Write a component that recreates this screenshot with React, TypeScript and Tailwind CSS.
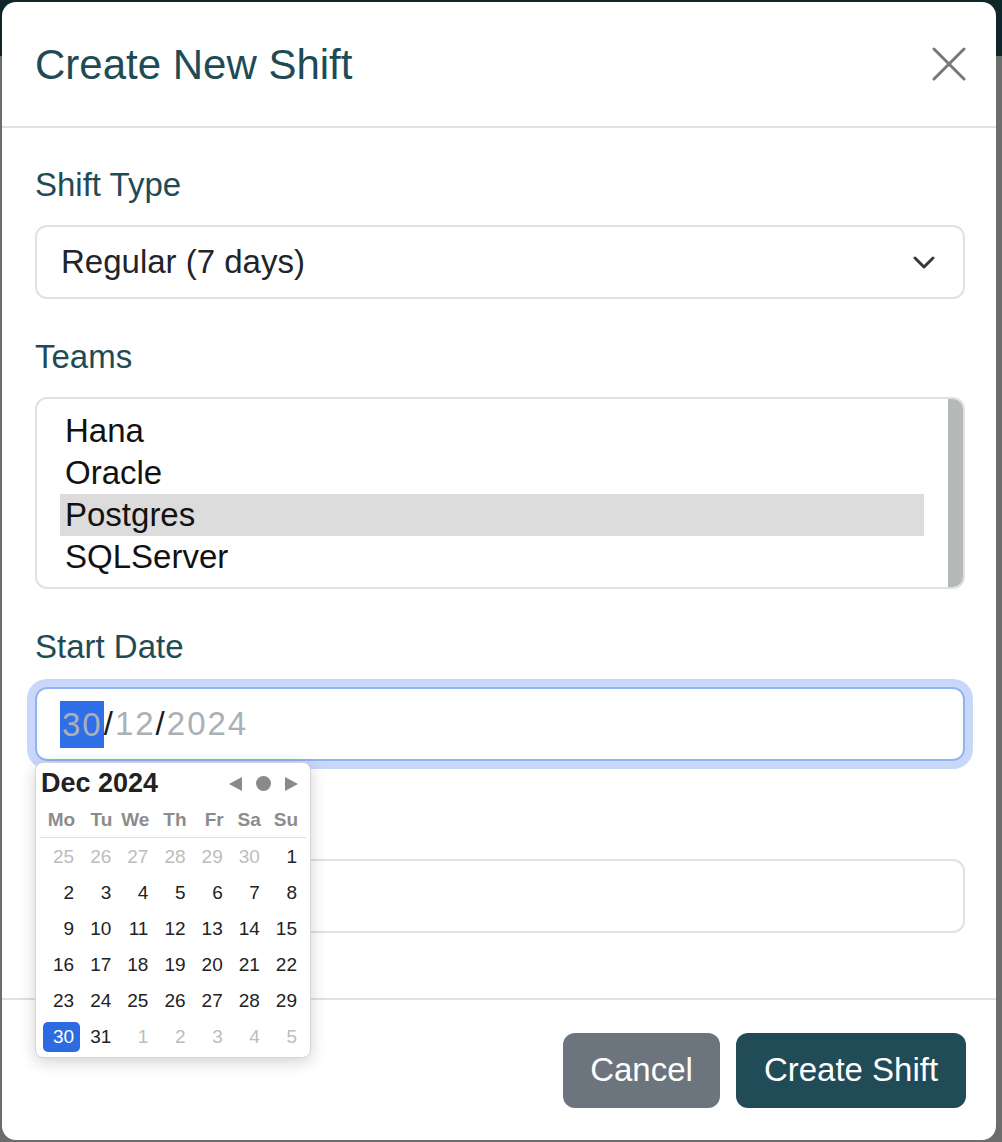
import React from "react";

const teams = ["Hana", "Oracle", "Postgres", "SQLServer"];
const weekdays = ["Mo", "Tu", "We", "Th", "Fr", "Sa", "Su"];

type Day = { n: number; muted?: boolean; selected?: boolean };

const weeks: Day[][] = [
    [{ n: 25, muted: true }, { n: 26, muted: true }, { n: 27, muted: true }, { n: 28, muted: true }, { n: 29, muted: true }, { n: 30, muted: true }, { n: 1 }],
    [2, 3, 4, 5, 6, 7, 8].map(n => ({ n })),
    [9, 10, 11, 12, 13, 14, 15].map(n => ({ n })),
    [16, 17, 18, 19, 20, 21, 22].map(n => ({ n })),
    [23, 24, 25, 26, 27, 28, 29].map(n => ({ n })),
    [{ n: 30, selected: true }, { n: 31 }, { n: 1, muted: true }, { n: 2, muted: true }, { n: 3, muted: true }, { n: 4, muted: true }, { n: 5, muted: true }],
];

function Label({ children }: { children: React.ReactNode }) {
    return <div className="text-[33px] leading-[48px] text-[#1e4b56] mb-[16px]">{children}</div>;
}

function DatePopup() {
    return (
        <div className="absolute left-0 top-[75px] w-[276px] h-[296px] bg-white rounded-[8px] border border-[#d4d4d4] shadow-[0_4px_16px_rgba(0,0,0,0.18)] z-10 px-[4px]">
            <div className="h-[41px] flex items-center justify-between pl-[1px] pr-[8px]">
                <span className="text-[27px] font-bold text-[#222]">Dec 2024</span>
                <div className="flex items-center gap-[14px]">
                    <svg width="13" height="14" viewBox="0 0 13 14">
                        <path d="M0 7 L13 0 L13 14 Z" fill="#8a8a8a" />
                    </svg>
                    <svg width="15" height="15" viewBox="0 0 15 15">
                        <circle cx="7.5" cy="7.5" r="7.5" fill="#8a8a8a" />
                    </svg>
                    <svg width="13" height="14" viewBox="0 0 13 14">
                        <path d="M13 7 L0 0 L0 14 Z" fill="#8a8a8a" />
                    </svg>
                </div>
            </div>
            <div className="border-b border-[#e0e0e0] px-[3px] grid grid-cols-7 h-[34px] items-center">
                {weekdays.map(w => (
                    <div key={w} className="text-right pr-[5px] text-[19px] font-bold text-[#8c8c8c]">{w}</div>
                ))}
            </div>
            <div className="px-[3px] pt-[1px]">
                {weeks.map((week, i) => (
                    <div key={i} className="grid grid-cols-7 h-[36px] items-center">
                        {week.map((d, j) =>
                            d.selected ? (
                                <div key={j} className="h-[30px] rounded-[5px] bg-[#2d6be0] text-white text-right pr-[6px] text-[19px] font-medium leading-[30px]">{d.n}</div>
                            ) : (
                                <div key={j} className={"text-right pr-[6px] text-[19px] " + (d.muted ? "text-[#bdbdbd]" : "text-[#222]")}>{d.n}</div>
                            )
                        )}
                    </div>
                ))}
            </div>
        </div>
    );
}

export default function App() {
    return (
        <div
            className="w-[1002px] h-[1142px] overflow-hidden bg-[linear-gradient(to_bottom,#0e252a_0,#0e252a_56px,#6c6c6c_56px,#6c6c6c_100%)] pl-[2px] pt-[2px]"
            style={{ fontFamily: '"Liberation Sans", Arial, sans-serif' }}
        >
            <div className="w-[994px] h-[1138px] bg-white rounded-[14px] flex flex-col">
                <div className="h-[126px] border-b-2 border-[#dee2e6] flex items-center justify-between pl-[33px] pr-[30px]">
                    <h2 className="text-[42px] font-medium text-[#1e4b56]">Create New Shift</h2>
                    <svg width="34" height="34" viewBox="0 0 34 34">
                        <path d="M2 2 L32 32 M32 2 L2 32" stroke="#787878" strokeWidth="3" strokeLinecap="round" />
                    </svg>
                </div>

                <div className="flex-1 pl-[33px] pr-[31px] pt-[33px]">
                    <Label>Shift Type</Label>
                    <div className="h-[74px] rounded-[12px] border-2 border-[#dee2e6] flex items-center justify-between pl-[24px] pr-[28px] mb-[34px]">
                        <span className="text-[33px] text-[#212529]">Regular (7 days)</span>
                        <svg width="22" height="13" viewBox="0 0 22 13">
                            <path d="M2 2 L11 11 L20 2" fill="none" stroke="#343a40" strokeWidth="3" strokeLinecap="round" strokeLinejoin="round" />
                        </svg>
                    </div>

                    <Label>Teams</Label>
                    <div className="h-[192px] rounded-[12px] border-2 border-[#dee2e6] flex overflow-hidden mb-[34px]">
                        <div className="flex-1 pt-[11px] pl-[23px] pr-[24px]">
                            {teams.map(t => (
                                <div
                                    key={t}
                                    className={"h-[42px] leading-[42px] pl-[5px] text-[33px] text-[#111] " + (t === "Postgres" ? "bg-[#dcdcdc]" : "")}
                                >
                                    {t}
                                </div>
                            ))}
                        </div>
                        <div className="w-[15px] bg-[#b5bab6]" />
                    </div>

                    <Label>Start Date</Label>
                    <div className="relative mb-[34px]">
                        <div className="h-[74px] rounded-[12px] border-2 border-[#8fb3f3] shadow-[0_0_0_8px_#c8d7fa] flex items-center pl-[23px] text-[33px] tracking-[2px]">
                            <span className="bg-[#2f6fe8] text-[#a9b0b8] pl-[2px] pr-[1px] leading-[47px]">30</span>
                            <span className="text-[#1a1a1a]">/</span>
                            <span className="text-[#a9b0b8]">12</span>
                            <span className="text-[#1a1a1a]">/</span>
                            <span className="text-[#a9b0b8]">2024</span>
                        </div>
                        <DatePopup />
                    </div>

                    {/* label of the second field sits under the open calendar */}
                    <div className="h-[48px] mb-[16px]" />
                    <div className="h-[74px] rounded-[12px] border-2 border-[#dee2e6]" />
                </div>

                <div className="h-[142px] border-t-2 border-[#dee2e6] flex items-center justify-end gap-[16px] pr-[30px]">
                    <button className="w-[157px] h-[75px] rounded-[12px] bg-[#6c757d] text-white text-[33px]">Cancel</button>
                    <button className="w-[230px] h-[75px] rounded-[12px] bg-[#204b57] text-white text-[33px]">Create Shift</button>
                </div>
            </div>
        </div>
    );
}
